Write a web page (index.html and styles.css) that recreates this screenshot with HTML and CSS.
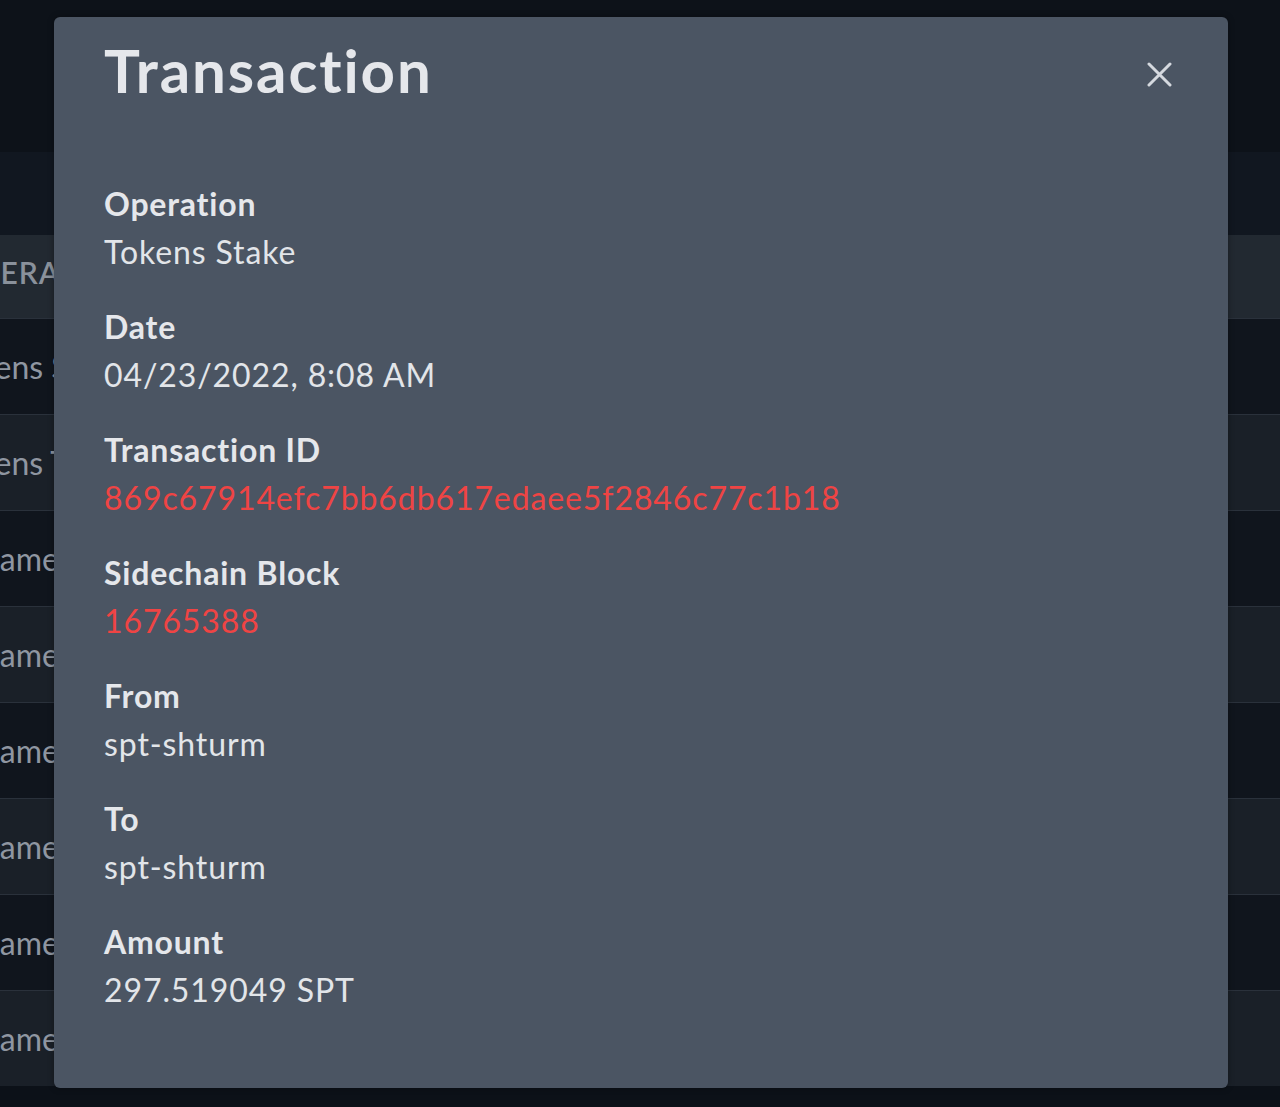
FILE: index.html
```html
<!DOCTYPE html>
<html lang="en">
<head>
<meta charset="utf-8">
<title>Transaction</title>
<link rel="stylesheet" href="styles.css">
</head>
<body>
<div class="page">
  <div class="topbar"></div>
  <div class="band"></div>
  <div class="table">
    <div class="row head"><div class="cell">Operation</div></div>
    <div class="row dark"><div class="cell">Tokens Stake</div></div>
    <div class="row light"><div class="cell">Tokens Transfer</div></div>
    <div class="row dark"><div class="cell">Rename</div></div>
    <div class="row light"><div class="cell">Rename</div></div>
    <div class="row dark"><div class="cell">Rename</div></div>
    <div class="row light"><div class="cell">Rename</div></div>
    <div class="row dark"><div class="cell">Rename</div></div>
    <div class="row light"><div class="cell">Rename</div></div>
  </div>
</div>

<div class="modal" role="dialog" aria-label="Transaction">
  <div class="modal-header">
    <h1 class="modal-title">Transaction</h1>
    <button class="close" aria-label="Close">
      <svg width="25" height="25" viewBox="0 0 25 25"><path d="M2 2 L23 23 M23 2 L2 23" stroke="currentColor" stroke-width="3" stroke-linecap="round" fill="none"/></svg>
    </button>
  </div>
  <dl class="details">
    <div class="item"><dt>Operation</dt><dd>Tokens Stake</dd></div>
    <div class="item"><dt>Date</dt><dd>04/23/2022, 8:08 AM</dd></div>
    <div class="item"><dt>Transaction ID</dt><dd class="link">869c67914efc7bb6db617edaee5f2846c77c1b18</dd></div>
    <div class="item"><dt>Sidechain Block</dt><dd class="link">16765388</dd></div>
    <div class="item"><dt>From</dt><dd>spt-shturm</dd></div>
    <div class="item"><dt>To</dt><dd>spt-shturm</dd></div>
    <div class="item"><dt>Amount</dt><dd>297.519049 SPT</dd></div>
  </dl>
</div>
</body>
</html>
```

FILE: styles.css
```css
* { box-sizing: border-box; }
html, body {
  margin: 0;
  padding: 0;
  background: #0c1118;
  font-family: "Lato", "Noto Sans", sans-serif;
  overflow: hidden;
}
.page {
  width: 1280px;
  height: 1107px;
  display: flex;
  flex-direction: column;
}
.topbar { height: 152px; background: #0d1219; }
.band { height: 83px; background: #111720; }
.table {
  display: flex;
  flex-direction: column;
}
.row {
  height: 96px;
  border-top: 1px solid #2a313b;
  display: flex;
  align-items: center;
  overflow: hidden;
}
.row.head {
  height: 83px;
  border-top: none;
  background: #222931;
  padding-bottom: 9px;
}
.row.dark { background: #10151d; }
.row.light { background: #1a2028; }
.cell {
  margin-left: -54px;
  font-size: 32px;
  color: #8f96a1;
  white-space: nowrap;
}
.row.head .cell {
  text-transform: uppercase;
  font-weight: 600;
  font-size: 30px;
  margin-left: -44px;
  letter-spacing: 1px;
  color: #8a919b;
}

.modal {
  position: absolute;
  left: 54px;
  top: 17px;
  width: 1174px;
  height: 1071px;
  background: #4b5563;
  border-radius: 6px;
  padding: 17px 56px 0 50px;
  color: #e5e7eb;
  box-shadow: 0 0 6px rgba(0,0,0,0.35);
}
.modal-header {
  display: flex;
  justify-content: space-between;
  align-items: flex-start;
}
.modal-title {
  margin: 0;
  font-size: 60px;
  line-height: 72px;
  font-weight: 700;
  letter-spacing: 1.9px;
  color: #e5e7eb;
}
.close {
  margin-top: 28px;
  padding: 0;
  border: none;
  background: transparent;
  color: #d5d9df;
  width: 25px;
  height: 25px;
  display: flex;
}
.details {
  margin: 74px 0 0 0;
  display: flex;
  flex-direction: column;
  gap: 27px;
}
.item dt {
  font-size: 32px;
  line-height: 48px;
  font-weight: 700;
  letter-spacing: 0.8px;
  color: #e5e7eb;
}
.item dd {
  margin: 0;
  font-size: 32px;
  line-height: 48px;
  letter-spacing: 0.9px;
  color: #e2e5e9;
}
.item dd.link { color: #ef4444; }
```
